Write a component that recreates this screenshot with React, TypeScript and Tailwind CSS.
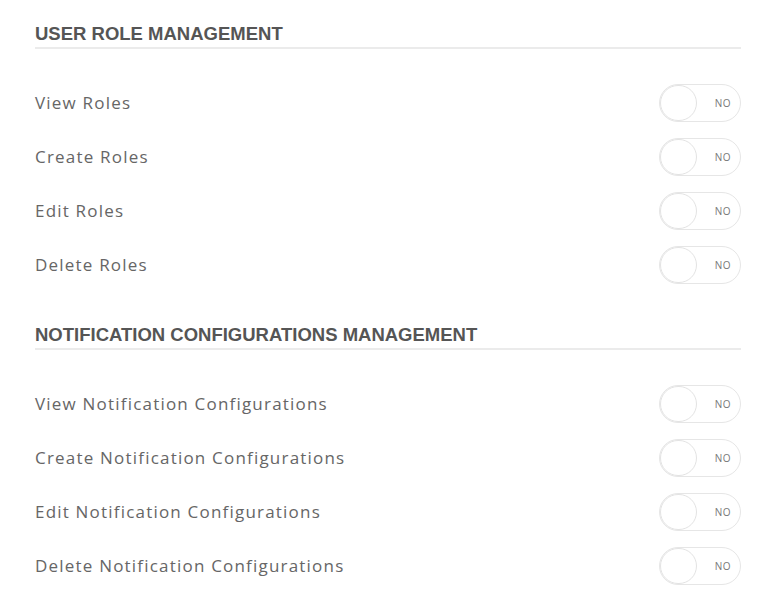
import React from "react";

const sections = [
  {
    title: "USER ROLE MANAGEMENT",
    items: ["View Roles", "Create Roles", "Edit Roles", "Delete Roles"],
  },
  {
    title: "NOTIFICATION CONFIGURATIONS MANAGEMENT",
    items: [
      "View Notification Configurations",
      "Create Notification Configurations",
      "Edit Notification Configurations",
      "Delete Notification Configurations",
    ],
  },
];

function Toggle() {
  return (
    <div className="relative h-[38px] w-[82px] rounded-full border border-[#e6e6e6] bg-white">
      <div className="absolute left-0 top-0 h-[36px] w-[37px] rounded-full border border-[#e3e3e3] bg-white" />
      <span
        className="absolute right-[9px] top-0 flex h-[36px] items-center text-[10px] text-[#777] tracking-[0.5px]"
        style={{ fontFamily: "'Open Sans', sans-serif" }}
      >
        NO
      </span>
    </div>
  );
}

export default function App() {
  return (
    <div className="min-h-[605px] w-[777px] bg-white pl-[35px] pr-[36px] pt-6">
      {sections.map((s, i) => (
        <div key={s.title} className={i > 0 ? "mt-[33px]" : ""}>
          <div
            className="h-5 border-b-2 border-[#ebebeb] pb-[3px] box-content text-[18.5px] font-bold leading-5 text-[#555]"
            style={{ fontFamily: "'Liberation Sans', Arial, sans-serif" }}
          >
            {s.title}
          </div>
          <div className="mt-[27px] flex flex-col">
            {s.items.map((it) => (
              <div key={it} className="flex h-[54px] items-center justify-between">
                <span
                  className="text-[17px] text-[#666] tracking-[1.2px]"
                  style={{ fontFamily: "'Open Sans', sans-serif" }}
                >
                  {it}
                </span>
                <Toggle />
              </div>
            ))}
          </div>
        </div>
      ))}
    </div>
  );
}
